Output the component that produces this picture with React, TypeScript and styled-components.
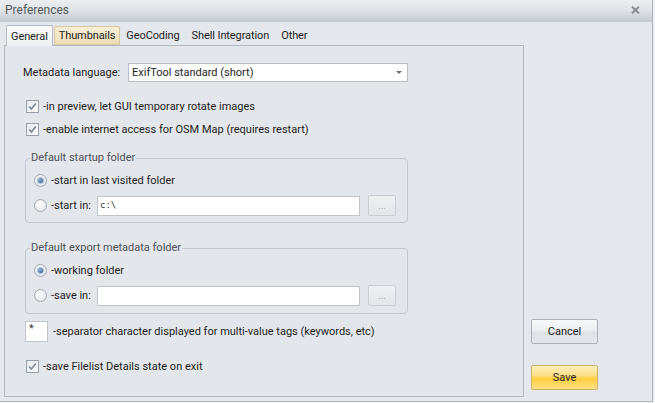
import React from "react";
import styled, { createGlobalStyle } from "styled-components";

const Global = createGlobalStyle`
  html, body { margin: 0; padding: 0; width: 655px; height: 403px; overflow: hidden; background: #eef0f3; }
  body { font-family: Roboto, "Liberation Sans", sans-serif; font-size: 11px; color: #1e1e1e; }
  * { box-sizing: border-box; }
`;

const Screen = styled.div`
  display: flex;
  width: 655px;
  height: 403px;
`;

const Window = styled.div`
  width: 653px;
  height: 402px;
  display: flex;
  flex-direction: column;
  background: #e4e7eb;
  border-right: 1px solid #aeb3ba;
  border-bottom: 1px solid #b3b7bd;
`;

const Backdrop = styled.div`
  flex: 1;
  background: #eef0f3;
`;

const TitleBar = styled.div`
  height: 22px;
  flex: none;
  display: flex;
  align-items: center;
  justify-content: space-between;
  padding: 0 12px 2px 5px;
  background: linear-gradient(#eceef1 0%, #e0e3e7 45%, #c4c9d1 100%);
`;

const Title = styled.span`
  font-size: 12px;
  color: #555a60;
`;

const Body = styled.div`
  flex: 1;
  display: flex;
`;

const LeftCol = styled.div`
  margin-left: 4px;
  width: 520px;
  display: flex;
  flex-direction: column;
`;

const TabRow = styled.div`
  height: 23px;
  display: flex;
  align-items: flex-end;
  padding-left: 2px;
  position: relative;
  z-index: 1;
  letter-spacing: -0.1px;
`;

const Tab = styled.div<{ $active?: boolean; $hover?: boolean }>`
  height: ${(p) => (p.$active ? 21 : 19)}px;
  margin-bottom: ${(p) => (p.$active ? -1 : 0)}px;
  padding: 0 ${(p) => (p.$active || p.$hover ? 4 : 5)}px;
  margin-right: ${(p) => (p.$active ? 1 : 0)}px;
  display: flex;
  align-items: center;
  color: #1e1e1e;
  border: 1px solid ${(p) => (p.$active ? "#b7bcc4" : p.$hover ? "#d8c69e" : "transparent")};
  border-bottom: ${(p) => (p.$active ? "none" : undefined)};
  border-radius: 2px 2px 0 0;
  background: ${(p) =>
    p.$active
      ? "linear-gradient(#fbfbfc, #eef0f2)"
      : p.$hover
      ? "linear-gradient(#f8efd6, #ecdcb4)"
      : "transparent"};
`;

const Panel = styled.div`
  height: 352px;
  border: 1px solid #b4b9c0;
  background: #e3e6ea;
  padding: 17px 0 0 20px;
  display: flex;
  flex-direction: column;
`;

const Row = styled.div<{ $mt?: number }>`
  display: flex;
  align-items: center;
  margin-top: ${(p) => p.$mt ?? 0}px;
  min-height: 16px;
`;

const FieldLabel = styled.span`
  width: 105px;
  margin-left: -2px;
`;

const Combo = styled.div`
  width: 280px;
  height: 19px;
  background: #fff;
  border: 1px solid #b9bec6;
  display: flex;
  align-items: center;
  justify-content: space-between;
  padding: 0 5px 0 3px;
`;

const Arrow = styled.span`
  width: 0;
  height: 0;
  border-left: 3px solid transparent;
  border-right: 3px solid transparent;
  border-top: 3px solid #6d737b;
`;

const Check = styled.span`
  width: 13px;
  height: 13px;
  margin-left: 1px;
  margin-right: 4px;
  border: 1px solid #97a0aa;
  background: linear-gradient(135deg, #e6e9ec, #fafbfc);
  display: inline-flex;
  align-items: center;
  justify-content: center;
  flex: none;
`;

const Radio = styled.span<{ $on?: boolean }>`
  width: 13px;
  height: 13px;
  margin-right: 4px;
  border-radius: 50%;
  border: 1px solid #a2a9b2;
  background: radial-gradient(circle at 40% 35%, #fdfdfe, #dfe2e6);
  display: inline-flex;
  align-items: center;
  justify-content: center;
  flex: none;
  &::after {
    content: "";
    display: ${(p) => (p.$on ? "block" : "none")};
    width: 5px;
    height: 5px;
    border-radius: 50%;
    background: radial-gradient(circle at 35% 35%, #8fb0d6, #2d5488);
    box-shadow: 0 0 1px 1px #aabbd2;
  }
`;

const Group = styled.fieldset<{ $mt: number }>`
  width: 383px;
  margin: ${(p) => p.$mt}px 0 0 0;
  padding: 0 0 ${(p) => (p.$mt > 16 ? 7 : 6)}px 8px;
  border: 1px solid #c3c7cd;
  border-radius: 4px;
  min-width: 0;
`;

const Legend = styled.legend`
  padding: 0 1px;
  margin-left: -4px;
  line-height: 14px;
  color: #4d5259;
`;

const RadioLabel = styled.span`
  width: 46px;
`;

const TextBox = styled.div<{ $w: number; $h?: number; $mono?: boolean }>`
  width: ${(p) => p.$w}px;
  height: ${(p) => p.$h ?? 20}px;
  background: #fff;
  border: 1px solid #c0c5cc;
  padding: 2px 2px;
  font-family: ${(p) => (p.$mono ? '"DejaVu Sans Mono", "Liberation Mono", monospace' : "inherit")};
  font-size: ${(p) => (p.$mono ? 9 : 11)}px;
  line-height: 12px;
  color: #333;
  flex: none;
`;

const DotsButton = styled.div`
  width: 28px;
  height: 21px;
  margin-left: 8px;
  border: 1px solid #c9cdd3;
  border-radius: 2px;
  background: linear-gradient(#eef0f2, #e4e7ea);
  color: #a4a8ae;
  display: flex;
  align-items: center;
  justify-content: center;
  padding-bottom: 1px;
  font-size: 10px;
`;

const SepBox = styled(TextBox)`
  margin-right: 5px;
  padding: 1px 3px;
`;

const RightCol = styled.div`
  margin-left: 7px;
  display: flex;
  flex-direction: column;
`;

const Button = styled.div<{ $primary?: boolean; $mt: number }>`
  width: 67px;
  height: 25px;
  margin-top: ${(p) => p.$mt}px;
  display: flex;
  align-items: center;
  justify-content: center;
  font-size: 11px;
  color: #1e1e1e;
  border-radius: 2px;
  border: 1px solid ${(p) => (p.$primary ? "#cdb16c" : "#abb0b8")};
  background: ${(p) =>
    p.$primary
      ? "linear-gradient(#fdefb8 0%, #fde08a 40%, #ffcf3e 55%, #ffe184 100%)"
      : "linear-gradient(#f8f9fa 0%, #eceef1 45%, #dfe2e6 55%, #e3e6ea 100%)"};
`;

const CheckMark = () => (
  <svg width="9" height="9" viewBox="0 0 9 9">
    <path d="M1.2 4.6 L3.4 7 L7.8 1.4" fill="none" stroke="#7c8a9a" strokeWidth="1.6" />
  </svg>
);

const CloseIcon = () => (
  <svg width="9" height="8" viewBox="0 0 9 8">
    <path d="M1 0.8 L8 7.2 M8 0.8 L1 7.2" stroke="#858a92" strokeWidth="2" />
  </svg>
);

const CheckRow = ({ mt, children }: { mt: number; children: React.ReactNode }) => (
  <Row $mt={mt}>
    <Check>
      <CheckMark />
    </Check>
    <span>{children}</span>
  </Row>
);

export default function App() {
  return (
    <Screen>
      <Global />
      <Window>
        <TitleBar>
          <Title>Preferences</Title>
          <CloseIcon />
        </TitleBar>
        <Body>
          <LeftCol>
            <TabRow>
              <Tab $active>General</Tab>
              <Tab $hover>Thumbnails</Tab>
              <Tab>GeoCoding</Tab>
              <Tab>Shell Integration</Tab>
              <Tab>Other</Tab>
            </TabRow>
            <Panel>
              <Row>
                <FieldLabel>Metadata language:</FieldLabel>
                <Combo>
                  <span>ExifTool standard (short)</span>
                  <Arrow />
                </Combo>
              </Row>
              <CheckRow mt={16}>-in preview, let GUI temporary rotate images</CheckRow>
              <CheckRow mt={7}>-enable internet access for OSM Map (requires restart)</CheckRow>

              <Group $mt={14}>
                <Legend>Default startup folder</Legend>
                <Row $mt={7}>
                  <Radio $on />
                  <span>-start in last visited folder</span>
                </Row>
                <Row $mt={7}>
                  <Radio />
                  <RadioLabel>-start in:</RadioLabel>
                  <TextBox $w={263} $mono>
                    c:\
                  </TextBox>
                  <DotsButton>...</DotsButton>
                </Row>
              </Group>

              <Group $mt={18}>
                <Legend>Default export metadata folder</Legend>
                <Row $mt={7}>
                  <Radio $on />
                  <span>-working folder</span>
                </Row>
                <Row $mt={7}>
                  <Radio />
                  <RadioLabel>-save in:</RadioLabel>
                  <TextBox $w={263} />
                  <DotsButton>...</DotsButton>
                </Row>
              </Group>

              <Row $mt={7}>
                <SepBox $w={23} $h={21}>
                  *
                </SepBox>
                <span>-separator character displayed for multi-value tags (keywords, etc)</span>
              </Row>
              <CheckRow mt={16}>-save Filelist Details state on exit</CheckRow>
            </Panel>
          </LeftCol>
          <RightCol>
            <Button $mt={297}>Cancel</Button>
            <Button $mt={21} $primary>
              Save
            </Button>
          </RightCol>
        </Body>
      </Window>
      <Backdrop />
    </Screen>
  );
}
